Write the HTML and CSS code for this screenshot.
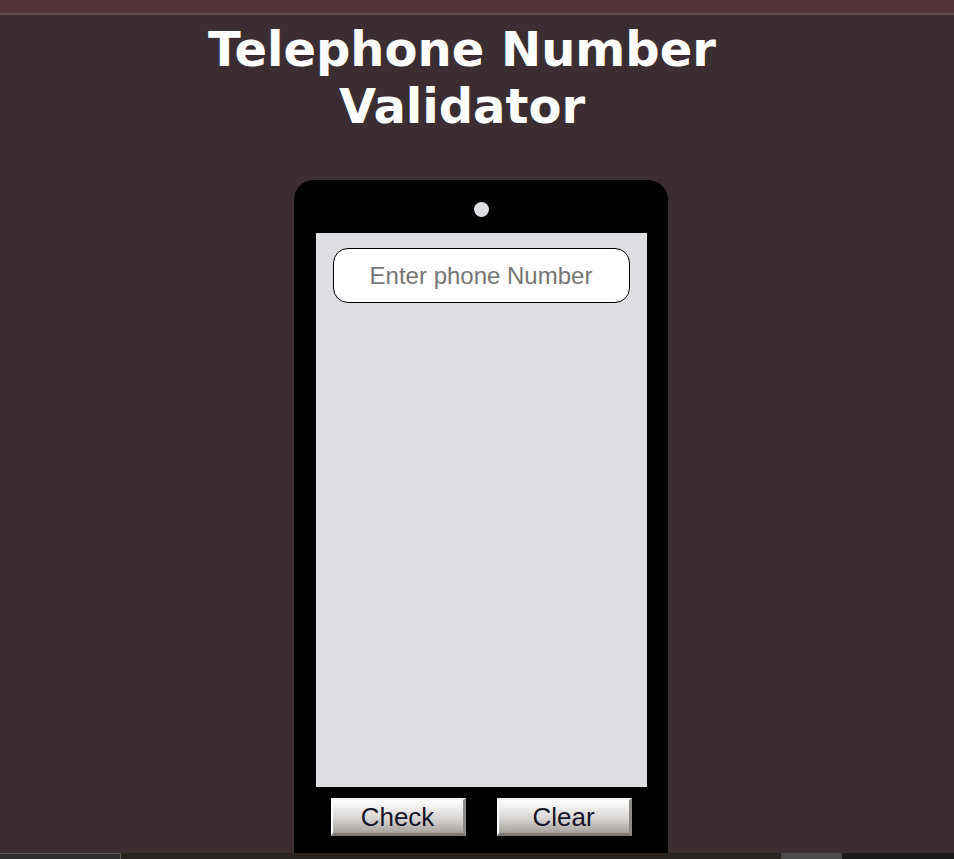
FILE: index.html
```html
<!DOCTYPE html>
<html lang="en">
<head>
<meta charset="utf-8">
<title>Telephone Number Validator</title>
<link rel="stylesheet" href="styles.css">
</head>
<body>
<div class="topbar"></div>
<main class="page">
  <h1 class="title">Telephone Number Validator</h1>
  <div class="phone">
    <div class="camera"></div>
    <div class="screen">
      <input class="number-input" type="text" placeholder="Enter phone Number">
    </div>
    <div class="buttons">
      <button class="btn">Check</button>
      <button class="btn">Clear</button>
    </div>
  </div>
</main>
<div class="taskbar">
  <div class="tb-a"></div>
  <div class="tb-b"></div>
  <div class="tb-c"></div>
  <div class="tb-d"></div>
</div>
</body>
</html>
```
FILE: styles.css
```css
html, body {
  margin: 0;
  padding: 0;
  height: 100%;
  overflow: hidden;
}
body {
  background: #3a2e33;
  font-family: "Liberation Sans", Arial, sans-serif;
}
.topbar {
  height: 13px;
  background: #53333a;
  border-bottom: 2px solid #5f4a4e;
}
.page {
  display: flex;
  flex-direction: column;
  align-items: center;
}
.title {
  margin: 6px 30px 0 0;
  width: 580px;
  text-align: center;
  color: #ffffff;
  font-family: "DejaVu Sans", Verdana, sans-serif;
  font-weight: bold;
  font-size: 48px;
  line-height: 57px;
}
.phone {
  margin: 45px 0 0 8px;
  width: 374px;
  height: 700px;
  background: #000;
  border-radius: 20px;
  display: flex;
  flex-direction: column;
  align-items: center;
}
.camera {
  margin-top: 22px;
  width: 15px;
  height: 15px;
  border-radius: 50%;
  background: #dedde2;
}
.screen {
  margin-top: 16px;
  margin-left: 1px;
  width: 331px;
  height: 554px;
  background: #dfdde2;
  display: flex;
  justify-content: center;
  align-items: flex-start;
}
.number-input {
  margin: 15px 1px 0 0;
  width: 297px;
  height: 55px;
  box-sizing: border-box;
  border: 1px solid #000;
  border-radius: 15px;
  background: #fff;
  text-align: center;
  font-family: "Liberation Sans", Arial, sans-serif;
  font-size: 24px;
  color: #333;
  outline: none;
}
.number-input::placeholder {
  color: #757575;
}
.buttons {
  margin-top: 11px;
  display: flex;
  gap: 31px;
}
.btn {
  width: 135px;
  height: 38px;
  box-sizing: border-box;
  padding: 0;
  border-style: solid;
  border-width: 2px 3px 3px 2px;
  border-color: #f2f2f2 #8e8a88 #7d7977 #ffffff;
  background: linear-gradient(#ffffff, #d9d7d5 55%, #a6a19d);
  color: #151527;
  font-family: "Liberation Sans", Arial, sans-serif;
  font-size: 26px;
  line-height: 32px;
}
.taskbar {
  position: fixed;
  left: 0;
  right: 0;
  bottom: 0;
  height: 6px;
  display: flex;
}
.tb-a {
  width: 120px;
  background: #2f2d2d;
  border-top: 1px solid #5c5a5a;
  border-right: 1px solid #5c5a5a;
}
.tb-b {
  flex: 1;
  background: #29241f;
}
.tb-c {
  width: 61px;
  background: #4b4949;
}
.tb-d {
  width: 112px;
  background: #1c1b1b;
}
```
